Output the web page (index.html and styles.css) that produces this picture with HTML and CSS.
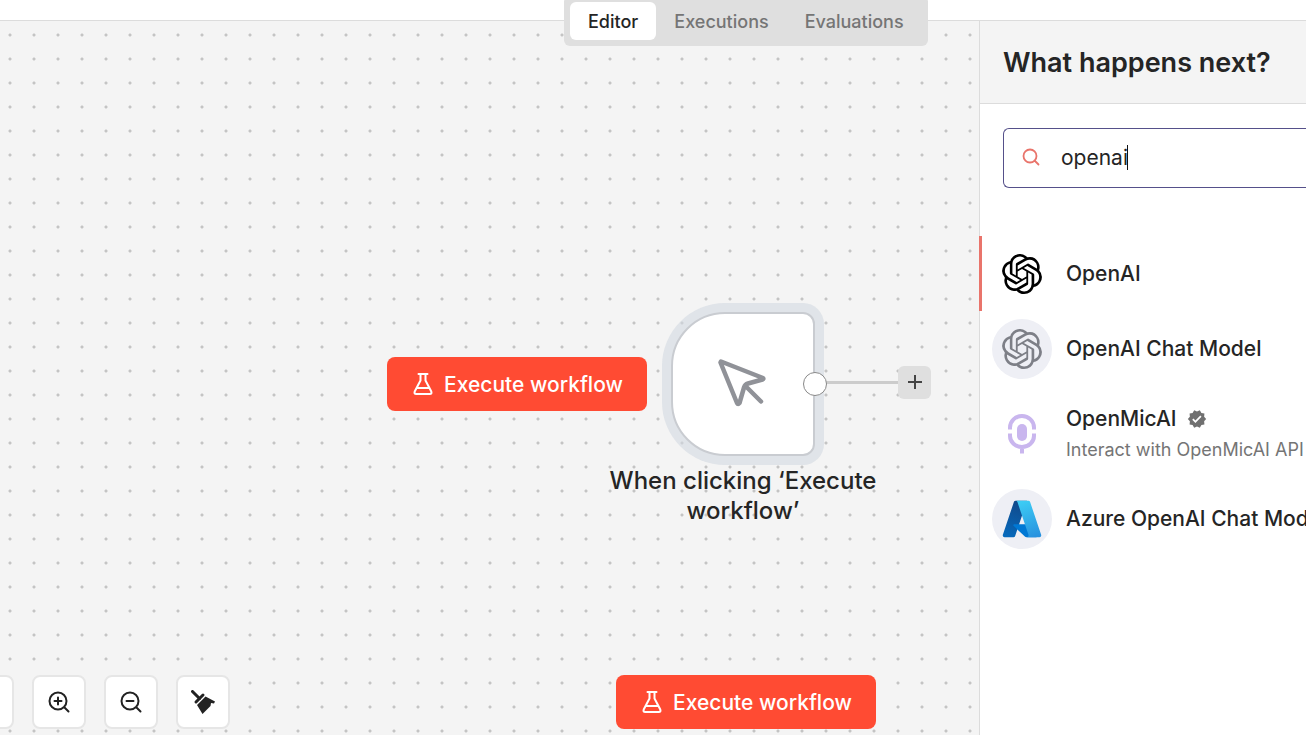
FILE: index.html
```html
<!DOCTYPE html>
<html lang="en">
<head>
  <meta charset="UTF-8" />
  <meta name="viewport" content="width=device-width, initial-scale=1.0" />
  <title>Workflow Editor</title>
  <link rel="stylesheet" href="styles.css">
</head>
<body>
  <svg class="defs" width="0" height="0" aria-hidden="true">
    <symbol id="flask" viewBox="0 0 20 24">
      <path d="M5.5 2h9M7.5 2v6.500L1.700 19.500Q.9 22 3.200 22h13.600q2.300 0 1.500-2.500L12.500 8.500V2M4.500 16h11" fill="none" stroke="currentColor" stroke-width="2" stroke-linecap="round" stroke-linejoin="round" />
    </symbol>
    <symbol id="openai" viewBox="0 0 24 24">
      <path fill="currentColor" d="M22.2819 9.8211a5.9847 5.9847 0 0 0-.5157-4.9108 6.0462 6.0462 0 0 0-6.5098-2.9A6.0651 6.0651 0 0 0 4.9807 4.1818a5.9847 5.9847 0 0 0-3.9977 2.9 6.0462 6.0462 0 0 0 .7427 7.0966 5.98 5.98 0 0 0 .511 4.9107 6.051 6.051 0 0 0 6.5146 2.9001A5.9847 5.9847 0 0 0 13.2599 24a6.0557 6.0557 0 0 0 5.7718-4.2058 5.9894 5.9894 0 0 0 3.9977-2.9001 6.0557 6.0557 0 0 0-.7475-7.0729zm-9.022 12.6081a4.4755 4.4755 0 0 1-2.8764-1.0408l.1419-.0804 4.7783-2.7582a.7948.7948 0 0 0 .3927-.6813v-6.7369l2.02 1.1686a.071.071 0 0 1 .038.052v5.5826a4.504 4.504 0 0 1-4.4945 4.4944zm-9.6607-4.1254a4.4708 4.4708 0 0 1-.5346-3.0137l.142.0852 4.783 2.7582a.7712.7712 0 0 0 .7806 0l5.8428-3.3685v2.3324a.0804.0804 0 0 1-.0332.0615L9.74 19.9502a4.4992 4.4992 0 0 1-6.1408-1.6464zM2.3408 7.8956a4.485 4.485 0 0 1 2.3655-1.9728V11.6a.7664.7664 0 0 0 .3879.6765l5.8144 3.3543-2.0201 1.1685a.0757.0757 0 0 1-.071 0l-4.8303-2.7865A4.504 4.504 0 0 1 2.3408 7.872zm16.5963 3.8558L13.1038 8.364 15.1192 7.2a.0757.0757 0 0 1 .071 0l4.8303 2.7913a4.4944 4.4944 0 0 1-.6765 8.1042v-5.6772a.79.79 0 0 0-.407-.667zm2.0107-3.0231l-.142-.0852-4.7735-2.7818a.7759.7759 0 0 0-.7854 0L9.409 9.2297V6.8974a.0662.0662 0 0 1 .0284-.0615l4.8303-2.7866a4.4992 4.4992 0 0 1 6.6802 4.66zM8.3065 12.863l-2.02-1.1638a.0804.0804 0 0 1-.038-.0567V6.0742a4.4992 4.4992 0 0 1 7.3757-3.4537l-.142.0805L8.704 5.459a.7948.7948 0 0 0-.3927.6813zm1.0976-2.3654l2.602-1.4998 2.6069 1.4998v2.9994l-2.5974 1.4997-2.6067-1.4997Z" />
    </symbol>
  </svg>

  <header class="topbar">
    <nav class="tabs">
      <button class="tab active">Editor</button>
      <button class="tab">Executions</button>
      <button class="tab">Evaluations</button>
    </nav>
  </header>

  <div class="workspace">
    <main class="canvas">
      <div class="trigger">
        <button class="execute">
          <svg width="20" height="24"><use href="#flask" /></svg>
          Execute workflow
        </button>
        <div class="node">
          <svg width="48" height="48" viewBox="0 0 48 48">
            <path d="M3 2.500 45 19q1 1-.5 1.500L30 24.500q-3 1-4 4L21.500 44q-1.500 2-2.500 0L2.500 3.500zM28 27.500 43 42.500" fill="none" stroke="#909298" stroke-width="4.500" stroke-linecap="round" stroke-linejoin="round" />
          </svg>
          <span class="handle"></span>
        </div>
        <span class="edge"></span>
        <button class="add" aria-label="Add node">
          <svg width="16" height="16" viewBox="0 0 16 16"><path d="M8 1v14M1 8h14" stroke="#444" stroke-width="2" /></svg>
        </button>
      </div>
      <p class="node-label">When clicking ‘Execute workflow’</p>

      <div class="controls">
        <button aria-label="Fit view"></button>
        <button aria-label="Zoom in">
          <svg width="24" height="24" viewBox="0 0 24 24"><path d="M17 17l4.500 4.500M11 7.500v7M7.500 11h7M19.500 11a8.500 8.500 0 1 1-17 0 8.500 8.500 0 0 1 17 0z" /></svg>
        </button>
        <button aria-label="Zoom out">
          <svg width="24" height="24" viewBox="0 0 24 24"><path d="M17 17l4.500 4.500M7.500 11h7M19.500 11a8.500 8.500 0 1 1-17 0 8.500 8.500 0 0 1 17 0z" /></svg>
        </button>
        <button aria-label="Tidy up">
          <svg width="24" height="24" viewBox="0 0 24 24"><path d="M1.500 1.500l7 7" stroke-width="3" /><path d="M5 12l7-7" stroke-width="3" /><path d="M6 15l8.500-8.500 9.500 5-1 2-3-.5-.5 3-8 8z" fill="#222" stroke="none" /></svg>
        </button>
      </div>

      <button class="execute run">
        <svg width="20" height="24"><use href="#flask" /></svg>
        Execute workflow
      </button>
    </main>

    <aside class="panel">
      <h1>What happens next?</h1>
      <div class="search">
        <svg width="18" height="18" viewBox="0 0 18 18"><path d="M12.500 12.500l4 4M14.500 8a6.500 6.500 0 1 1-13 0 6.500 6.500 0 0 1 13 0z" fill="none" stroke="#e9746b" stroke-width="1.800" stroke-linecap="round" /></svg>
        <input type="text" value="openai" aria-label="Search nodes" />
        <span class="caret"></span>
      </div>
      <ul class="results">
        <li class="item selected">
          <span class="icon"><svg width="40" height="40"><use href="#openai" /></svg></span>
          <div class="name">OpenAI</div>
        </li>
        <li class="item">
          <span class="icon round"><svg width="40" height="40"><use href="#openai" /></svg></span>
          <div class="name">OpenAI Chat Model</div>
        </li>
        <li class="item tall">
          <span class="icon">
            <svg width="28" height="40" viewBox="0 0 28 40">
              <path d="M2 15.500v-2a12 11.500 0 0 1 24 0v2M2 19.500v2.500a12 11 0 0 0 24 0v-2.500M14 33v6.500" fill="none" stroke="#c9b6ee" stroke-width="4" />
              <rect x="9" y="10" width="10" height="17" rx="5" fill="#c9b6ee" />
            </svg>
          </span>
          <div class="details">
            <div class="name">OpenMicAI
              <svg width="20" height="20" viewBox="0 0 24 24"><path fill="#707070" d="M23 12l-2.440-2.790.340-3.690-3.610-.820-1.890-3.200L12 2.960 8.600 1.500 6.710 4.690 3.100 5.500l.340 3.700L1 12l2.440 2.790-.340 3.700 3.610.820L8.600 22.500l3.400-1.470 3.400 1.460 1.890-3.190 3.610-.820-.340-3.690L23 12zm-12.910 4.720l-3.800-3.810 1.480-1.480 2.320 2.330 5.850-5.870 1.480 1.480-7.330 7.350z" /></svg>
            </div>
            <div class="description">Interact with OpenMicAI API</div>
          </div>
        </li>
        <li class="item">
          <span class="icon round">
            <svg width="42" height="42" viewBox="0 0 96 96">
              <defs>
                <linearGradient id="azure-left" x1="45" y1="12" x2="18" y2="90" gradientUnits="userSpaceOnUse"><stop stop-color="#114a8b" /><stop offset="1" stop-color="#0669bc" /></linearGradient>
                <linearGradient id="azure-right" x1="46" y1="10" x2="76" y2="89" gradientUnits="userSpaceOnUse"><stop stop-color="#3ccbf4" /><stop offset="1" stop-color="#2892df" /></linearGradient>
              </defs>
              <path fill="url(#azure-left)" d="M33.338 6.544h26.038l-27.030 80.087a4.152 4.152 0 0 1-3.933 2.824H8.149a4.145 4.145 0 0 1-3.928-5.470L29.404 9.368a4.152 4.152 0 0 1 3.934-2.825z" />
              <path fill="#0078d4" d="M71.175 60.261h-41.290a1.911 1.911 0 0 0-1.305 3.309l26.532 24.764a4.171 4.171 0 0 0 2.846 1.121h23.380z" />
              <path fill="url(#azure-right)" d="M66.595 9.364a4.145 4.145 0 0 0-3.928-2.820H33.648a4.146 4.146 0 0 1 3.928 2.820l25.184 74.620a4.146 4.146 0 0 1-3.928 5.472h29.020a4.146 4.146 0 0 0 3.927-5.472z" />
            </svg>
          </span>
          <div class="name">Azure OpenAI Chat Model</div>
        </li>
      </ul>
    </aside>
  </div>
</body>
</html>
```

FILE: styles.css
```css
:root {
  --border: #dcdcdc;
  --canvas: #f4f4f4;
  --accent: #ff4b33;
  --text: #252525;
  --muted: #757575;
}

* {
  box-sizing: border-box;
}

body {
  margin: 0;
  height: 100vh;
  display: flex;
  flex-direction: column;
  overflow: hidden;
  font-family: Inter, "Liberation Sans", sans-serif;
  font-size: 21px;
  color: var(--text);
  background: #fff;
}

button,
input {
  font: inherit;
  color: inherit;
}

button {
  border: none;
  padding: 0;
  cursor: pointer;
}

svg {
  display: block;
  flex-shrink: 0;
}

.defs {
  position: absolute;
}

/* top bar */
.topbar {
  position: relative;
  z-index: 2;
  flex: 0 0 21px;
  border-bottom: 1px solid var(--border);
}

.tabs {
  position: absolute;
  bottom: -26px;
  left: 564px;
  display: flex;
  padding: 6px;
  border-radius: 6px;
  background: #dfdfdf;
}

.tab {
  height: 38px;
  padding: 0 18px;
  border-radius: 6px;
  background: none;
  font-size: 18px;
  font-weight: 500;
  color: var(--muted);
}

.tab.active {
  background: #fff;
  color: var(--text);
}

.workspace {
  flex: 1;
  display: flex;
  min-height: 0;
}

/* canvas */
.canvas {
  position: relative;
  flex: 1;
  overflow: hidden;
  background: var(--canvas) radial-gradient(circle, #c4c4c4 1px, transparent 2px) -2px 2px / 24px 24px;
}

.trigger {
  position: absolute;
  top: 291px;
  left: 387px;
  display: flex;
  align-items: center;
}

.execute {
  display: flex;
  align-items: center;
  justify-content: center;
  gap: 11px;
  width: 260px;
  height: 54px;
  padding-left: 2px;
  border-radius: 8px;
  background: var(--accent);
  color: #fff;
  font-weight: 500;
}

.node {
  position: relative;
  z-index: 1;
  display: flex;
  align-items: center;
  justify-content: center;
  width: 144px;
  height: 144px;
  margin-left: 24px;
  padding: 0 3px 3px 0;
  border: 2px solid #c9ccd1;
  border-radius: 54px 12px 12px 54px;
  background: #fff;
  box-shadow: 0 0 0 9px rgba(210, 216, 225, 0.6);
}

.handle {
  position: absolute;
  top: 58px;
  right: -14px;
  width: 24px;
  height: 24px;
  border: 1px solid #888;
  border-radius: 50%;
  background: #fff;
}

.edge {
  width: 83px;
  height: 3px;
  margin-bottom: 4px;
  background: #ccc;
}

.add {
  display: flex;
  align-items: center;
  justify-content: center;
  width: 33px;
  height: 33px;
  margin-bottom: 4px;
  border-radius: 6px;
  background: #dfdfdf;
}

.node-label {
  position: absolute;
  top: 445px;
  left: 599px;
  width: 288px;
  margin: 0;
  font-size: 24px;
  font-weight: 500;
  line-height: 30px;
  text-align: center;
}

.controls {
  position: absolute;
  bottom: 6px;
  left: -40px;
  display: flex;
  gap: 18px;
}

.controls button {
  display: flex;
  align-items: center;
  justify-content: center;
  width: 54px;
  height: 54px;
  border: 2px solid #e6e6e6;
  border-radius: 8px;
  background: #fff;
}

.controls svg {
  fill: none;
  stroke: #222;
  stroke-width: 2;
  stroke-linecap: round;
}

.run {
  position: absolute;
  bottom: 6px;
  left: 616px;
}

/* node creator */
.panel {
  flex: 0 0 327px;
  min-width: 0;
  border-left: 1px solid var(--border);
  background: #fff;
}

.panel h1 {
  margin: 0;
  padding: 25px 23px 23px;
  border-bottom: 1px solid var(--border);
  background: var(--canvas);
  font-size: 27px;
  font-weight: 600;
  line-height: 34px;
}

.search {
  position: relative;
  display: flex;
  align-items: center;
  gap: 21px;
  height: 60px;
  margin: 24px 0 48px 23px;
  padding: 0 0 2px 18px;
  border: 1px solid #55508a;
  border-right: none;
  border-radius: 6px 0 0 6px;
}

.search input {
  flex: 1;
  min-width: 0;
  padding: 0;
  border: none;
  outline: none;
  background: none;
}

.caret {
  position: absolute;
  left: 123px;
  width: 1px;
  height: 25px;
  background: #111;
}

/* rows overlap the panel border so the selected bar covers it */
.results {
  margin: 0 0 0 -1px;
  padding: 0;
  list-style: none;
}

.item {
  display: flex;
  align-items: center;
  gap: 14px;
  min-height: 75px;
  padding-left: 10px;
  border-left: 3px solid transparent;
  white-space: nowrap;
}

.item.selected {
  border-color: #e9746b;
}

.item.tall {
  min-height: 95px;
}

.icon {
  display: flex;
  flex: 0 0 60px;
  align-items: center;
  justify-content: center;
  height: 60px;
  color: #000;
}

.icon.round {
  border-radius: 50%;
  background: #eeeff5;
  color: #7d7f87;
}

.details {
  padding-top: 3px;
}

.name {
  display: flex;
  align-items: center;
  gap: 10px;
  font-weight: 500;
  line-height: 30px;
}

.description {
  font-size: 18px;
  line-height: 32px;
  color: var(--muted);
}
```
